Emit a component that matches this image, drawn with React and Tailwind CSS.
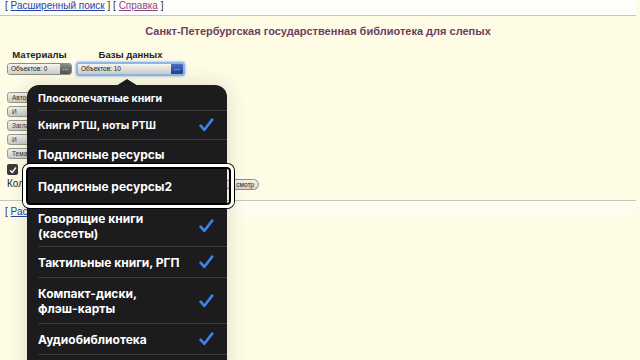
import React from 'react';

const items = [
    { label: 'Плоскопечатные книги', h: 'h-[26px]', text: 'text-[10.5px]', pt: 'pt-[2px]' },
    { label: 'Книги РТШ, ноты РТШ', h: 'h-[29px]', text: 'text-[10.5px]', checked: true },
    { label: 'Подписные ресурсы', h: 'h-[28px]', text: 'text-[12px]', noLine: true },
    { label: 'Подписные ресурсы2', h: 'h-[37px]', text: 'text-[12px]', focused: true },
    { label: ['Говорящие книги', '(кассеты)'], h: 'h-[42px]', text: 'text-[12px]', checked: true },
    { label: 'Тактильные книги, РГП', h: 'h-[31px]', text: 'text-[12px]', checked: true },
    { label: ['Компакт-диски,', 'флэш-карты'], h: 'h-[46px]', text: 'text-[12px]', checked: true },
    { label: 'Аудиобиблиотека', h: 'h-[31px]', text: 'text-[12px]', checked: true },
];

const Check = () => (
    <svg width="15" height="14" viewBox="0 0 15 14" className="shrink-0">
        <path d="M1.6 7.6 L5.4 11.8 L13.2 1.6" fill="none" stroke="#3d82f0" strokeWidth="2.6" strokeLinecap="round" strokeLinejoin="round" />
    </svg>
);

const FieldButton = ({ children }) => (
    <div className="h-[11px] w-[60px] rounded-[3px] border border-[#9a9a90] bg-gradient-to-b from-[#f2f2ee] to-[#c9c9c2] text-[6.5px] leading-[9px] pl-[4px] text-[#333]">
        {children}
    </div>
);

const App = () => {
    return (
        <div className="relative w-[640px] h-[360px] overflow-hidden bg-[#fffce6] font-['Liberation_Sans',Arial,sans-serif]">
            {/* top links */}
            <div className="h-[16px] w-[636px] bg-[#fdfdf9] border-b border-[#c9c6b4] px-[5px] text-[10px] leading-[12px] text-[#333] flex items-start">
                <span>[ <span className="text-[#2b43a6] underline">Расширенный поиск</span> ] [ <span className="text-[#8b4a86] underline">Справка</span> ]</span>
            </div>

            {/* title */}
            <div className="w-[636px] text-center mt-[8px] text-[11px] font-bold text-[#6d3d5d] leading-[14px]">
                Санкт-Петербургская государственная библиотека для слепых
            </div>

            {/* selectors */}
            <div className="flex gap-[4px] pl-[7px] mt-[11px]">
                <div className="flex flex-col items-center w-[65px]">
                    <div className="text-[9.5px] font-bold text-[#222] leading-[12px]">Материалы</div>
                    <div className="mt-[2px] h-[12px] w-[65px] flex rounded-[3px] border border-[#8d8d85] overflow-hidden">
                        <div className="flex-1 bg-gradient-to-b from-[#f5f5f1] to-[#cfcfc8] text-[6.5px] leading-[10px] pl-[3px] text-[#222]">Объектов: 0</div>
                        <div className="w-[11px] bg-gradient-to-b from-[#8a8a8a] to-[#555] text-white text-[7px] leading-[8px] text-center">...</div>
                    </div>
                </div>
                <div className="flex flex-col items-center w-[109px]">
                    <div className="text-[9.5px] font-bold text-[#222] leading-[12px]">Базы данных</div>
                    <div className="mt-[1px] h-[14px] w-[109px] flex rounded-[3px] border-2 border-[#8fb6e8] overflow-hidden shadow-[0_0_3px_#7aa6e0]">
                        <div className="flex-1 bg-gradient-to-b from-[#f5f5f1] to-[#cfcfc8] text-[6.5px] leading-[10px] pl-[3px] text-[#222]">Объектов: 10</div>
                        <div className="w-[12px] bg-gradient-to-b from-[#4a6fc0] to-[#22408f] text-white text-[7px] leading-[7px] text-center">...</div>
                    </div>
                </div>
            </div>

            {/* search form (mostly hidden under the popover) */}
            <div className="flex flex-col gap-[3px] pl-[7px] mt-[16px]">
                <FieldButton>Автор</FieldButton>
                <FieldButton>И</FieldButton>
                <FieldButton>Заглавие</FieldButton>
                <FieldButton>И</FieldButton>
                <FieldButton>Тематика</FieldButton>
                <div className="flex items-center mt-[2px]">
                    <div className="w-[11px] h-[11px] rounded-[2px] bg-[#3a3a3a] flex items-center justify-center">
                        <svg width="8" height="8" viewBox="0 0 8 8"><path d="M1 4.2 L3.2 6.4 L7 1.5" fill="none" stroke="white" strokeWidth="1.4" /></svg>
                    </div>
                </div>
                <div className="flex items-center justify-between w-[252px]">
                    <span className="text-[10px] text-[#222] leading-[12px]">Кол</span>
                    <div className="h-[11px] w-[34px] rounded-full border border-[#8d8d85] bg-gradient-to-b from-[#f4f4f0] to-[#cfcfc8] text-[6.5px] leading-[9px] text-right pr-[4px] text-[#222]">смотр</div>
                </div>
            </div>

            <div className="mt-[10px] w-[636px] border-t border-[#c9c6b4] bg-gradient-to-b from-[#fdfcf4] to-[#fffce6] h-[22px] px-[5px] pt-[5px] text-[10px] leading-[12px] text-[#333]">
                [ <span className="text-[#2b43a6] underline">Рас</span>
            </div>

            {/* popover */}
            <div className="absolute left-[27px] top-[85px] w-[200px]">
                <div className="absolute left-[89px] -top-[6px] w-0 h-0 border-l-[11px] border-r-[11px] border-b-[7px] border-l-transparent border-r-transparent border-b-[#1c1c1e]" />
                <div className="relative rounded-[12px] bg-[#1c1c1e] font-['Inter',sans-serif] text-white pb-[30px] shadow-[0_0_20px_rgba(0,0,0,0.15)]">
                    {items.map((it, i) => (
                        <div key={i} className={`relative ${it.h} ${it.pt || ''} pl-[11px]`}>
                            <div className={`h-full flex items-center justify-between pr-[13px] ${it.focused || it.noLine ? '' : 'border-b border-[#3a3a3c]'}`}>
                                <div className={`${it.text} font-bold leading-[15px]`}>
                                    {Array.isArray(it.label) ? it.label.map((l, j) => <div key={j}>{l}</div>) : it.label}
                                </div>
                                {it.checked && <Check />}
                            </div>
                            {it.focused && (
                                <div className="absolute -left-[4px] -right-[7px] -top-[4px] -bottom-[3px] rounded-[7px] border-[3px] border-white shadow-[inset_0_0_0_2px_#000,0_0_0_1px_#000]" />
                            )}
                        </div>
                    ))}
                </div>
            </div>
        </div>
    );
};

export default App;
